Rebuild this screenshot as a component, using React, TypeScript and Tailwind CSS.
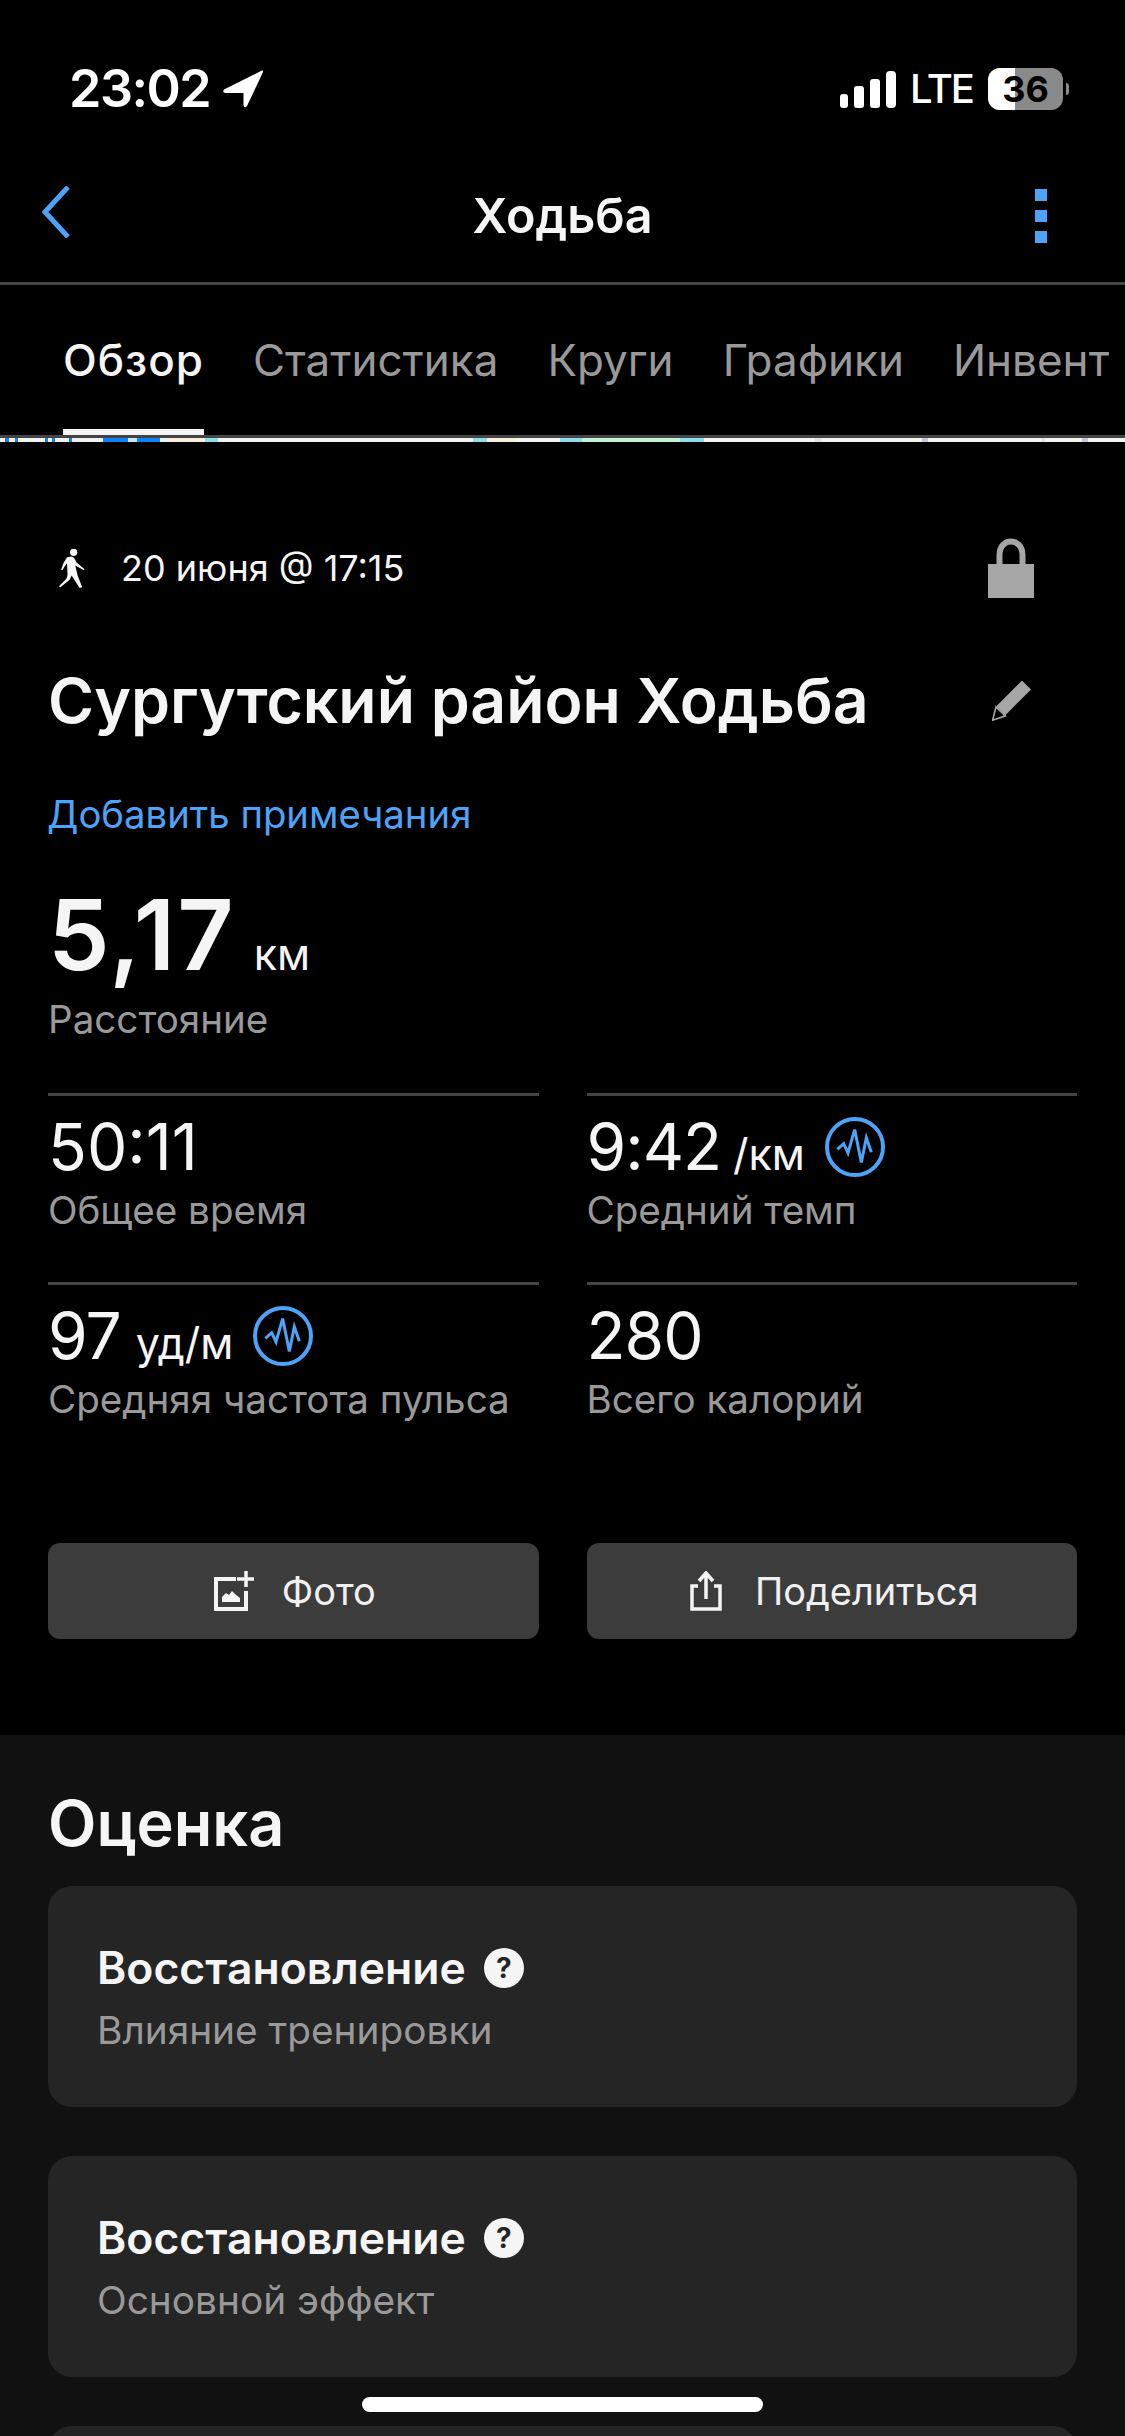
const font = { fontFamily: 'Inter, "Noto Sans", sans-serif' }

function PulseIcon() {
  return (
    <svg className="ml-[20px] size-[60px] shrink-0 self-center" viewBox="66 52 180 180" fill="none" stroke="#4da3f7">
      <circle cx="156" cy="142" r="84" strokeWidth="12" />
      <path d="M103 149 L122 132 L135 160 L155 90 L175 188 L190 114 L205 158" strokeWidth="9" />
    </svg>
  )
}

function Stat({
  value,
  unit,
  label,
  pulse,
  valueClass = 'tracking-[-1px]',
  unitClass = '',
}: {
  value: string
  unit?: string
  label: string
  pulse?: boolean
  valueClass?: string
  unitClass?: string
}) {
  return (
    <div className="h-[189px] border-t-[3px] border-[#444444] pt-[19px]">
      <div className="flex h-[64px] items-start">
        <div className="flex items-baseline gap-[15px]">
          <span className={`text-[64px] leading-[64px] text-[#f5f5f5] ${valueClass}`}>{value}</span>
          {unit && <span className={`text-[43px] leading-[64px] text-[#f5f5f5] ${unitClass}`}>{unit}</span>}
        </div>
        {pulse && <PulseIcon />}
      </div>
      <div className="mt-[6px] text-[38.6px] leading-[50px] text-[#999999]">{label}</div>
    </div>
  )
}

function ScoreCard({ label }: { label?: string }) {
  return (
    <div className="h-[221px] shrink-0 rounded-[24px] bg-[#252525] px-[49px] pt-[57px]">
      {label && (
        <>
          <div className="flex h-[50px] items-center gap-[18px]">
            <span className="text-[44.5px] leading-[50px] font-semibold text-[#f5f5f5]">Восстановление</span>
            <span className="flex size-[40px] items-center justify-center rounded-full bg-[#f5f5f5] text-[28px] leading-none font-bold text-[#252525]">?</span>
          </div>
          <div className="mt-[12px] text-[38.8px] leading-[50px] text-[#999999]">{label}</div>
        </>
      )}
    </div>
  )
}

const tabs = ['Обзор', 'Статистика', 'Круги', 'Графики', 'Инвент']

// the sliver of map that shows under the tabs
const mapStrip = [
  { x: 5, w: 4, fill: '#1a7fe8' },
  { x: 15, w: 3, fill: '#1a7fe8' },
  { x: 45, w: 3, fill: '#1a7fe8' },
  { x: 52, w: 3, fill: '#1a7fe8' },
  { x: 69, w: 3, fill: '#1a7fe8' },
  { x: 103, w: 25, fill: '#0a84ff' },
  { x: 128, w: 9, fill: '#cfe6fb' },
  { x: 137, w: 23, fill: '#0a84ff' },
  { x: 167, w: 38, fill: '#f5efdc' },
  { x: 205, w: 13, fill: '#8fdcea' },
  { x: 473, w: 14, fill: '#8fdcea' },
  { x: 487, w: 28, fill: '#f5efdc' },
  { x: 560, w: 22, fill: '#8fdcea' },
  { x: 582, w: 98, fill: '#c5f0d8' },
  { x: 680, w: 24, fill: '#8fdcea' },
  { x: 815, w: 6, fill: '#dfe3e8' },
  { x: 922, w: 6, fill: '#c4c9d0' },
  { x: 1042, w: 3, fill: '#dfe3e8' },
  { x: 1082, w: 6, fill: '#c4c9d0' },
]

export default function App() {
  return (
    <div className="relative h-[2436px] w-[1125px] overflow-hidden bg-black" style={font}>
      {/* Status bar */}
      <div className="flex h-[150px] items-start justify-between pt-[64px] pr-[56px] pl-[69px]">
        <div className="flex h-[50px] items-center gap-[13px]">
          <span className="text-[52px] leading-[50px] font-semibold tracking-[-1.5px] text-white">23:02</span>
          <svg className="h-[38px] w-[40px]" viewBox="0 0 40 38" fill="#ffffff">
            <path d="M39 0.5 Q40.5 0 40 2 L24 36 Q21.5 39 20.5 35 L20.5 23 L2 23 Q-1 22 1 19.5 Z" />
          </svg>
        </div>
        <div className="flex h-[50px] items-center">
          <div className="flex items-end gap-[6px]">
            <div className="h-[14px] w-[8px] rounded-[3px] bg-white" />
            <div className="h-[22px] w-[10px] rounded-[3px] bg-white" />
            <div className="h-[29px] w-[10px] rounded-[3px] bg-white" />
            <div className="h-[37px] w-[10px] rounded-[4px] bg-white" />
          </div>
          <span className="ml-[14px] text-[40px] leading-[50px] font-medium tracking-[-2px] text-white">LTE</span>
          <div className="relative ml-[15px] h-[42px] w-[75px] overflow-hidden rounded-[12px] bg-[#8a8a8a]">
            <div className="h-full w-[27px] bg-white" />
            <span className="absolute inset-0 flex items-center justify-center text-[36px] leading-none font-bold text-black">36</span>
          </div>
          <div className="ml-[3px] h-[12px] w-[3px] rounded-r-full bg-[#8a8a8a]" />
        </div>
      </div>

      {/* Nav */}
      <div className="relative flex h-[135px] items-start justify-center border-b-[3px] border-[#444444]">
        <svg className="absolute top-[36px] left-[42px] h-[52px] w-[28px]" viewBox="0 0 28 52" fill="none" stroke="#4da3f7" strokeWidth="5">
          <path d="M26 1 L3 26 L26 51" />
        </svg>
        <span className="mt-[36px] text-[48.5px] leading-[60px] font-semibold text-[#f5f5f5]">Ходьба</span>
        <div className="absolute top-[39px] right-[78px] flex flex-col gap-[9px]">
          <div className="size-[12px] bg-[#4da3f7]" />
          <div className="size-[12px] bg-[#4da3f7]" />
          <div className="size-[12px] bg-[#4da3f7]" />
        </div>
      </div>

      {/* Tabs */}
      <div className="flex h-[150px] gap-[49px] overflow-hidden pl-[63px]">
        {tabs.map((t, i) => (
          <div
            key={t}
            className={`flex h-[150px] shrink-0 items-center border-b-[6px] pt-[6px] text-[44px] ${
              i === 0 ? 'border-[#f5f5f5] font-medium tracking-[1px] text-[#f5f5f5]' : 'border-transparent text-[#999999]'
            }`}
          >
            {t}
          </div>
        ))}
      </div>
      <div className="h-[3px] bg-[#444444]" />
      <svg className="block h-[4px] w-[1125px]" viewBox="0 0 1125 4">
        <rect width="1125" height="4" fill="#f2f2f0" />
        {mapStrip.map((s) => (
          <rect key={s.x} x={s.x} width={s.w} height="4" fill={s.fill} />
        ))}
      </svg>

      {/* Activity summary */}
      <div className="px-[48px] pb-[96px]">
        <div className="mt-[96px] flex h-[60px] items-center justify-between pr-[43px]">
          <div className="flex items-center">
            <svg className="ml-[11px] h-[39px] w-[26px]" viewBox="88 85 78 118" fill="#f5f5f5">
              <circle cx="132" cy="95" r="11" />
              <path d="M112 110 Q100 125 94 148 L98 149 Q105 135 112 128 L113 155 Q115 165 110 175 L87 198 L92 201 L120 178 L126 165 L150 203 L158 201 L144 165 L137 135 L163 149 L165 146 L140 125 Q135 110 125 108 Z" />
            </svg>
            <span className="ml-[36px] text-[36px] leading-[50px] text-[#f5f5f5]">20 июня @ 17:15</span>
          </div>
          <svg className="h-[60px] w-[46px]" viewBox="0 0 46 60" fill="none">
            <path d="M11.5 26 V17 C11.5 -1 34.5 -1 34.5 17 V26" stroke="#a6a6a6" strokeWidth="6" />
            <rect y="26" width="46" height="34" fill="#a6a6a6" />
          </svg>
        </div>
        <div className="mt-[62px] flex h-[80px] items-center justify-between pr-[46px]">
          <h1 className="text-[62.5px] leading-[80px] font-semibold text-[#f5f5f5]">Сургутский район Ходьба</h1>
          <svg className="h-[41px] w-[39px]" viewBox="95 480 117 122" fill="none">
            <path d="M185 481 L212 508 L135 585 L108 558 Z" fill="#a6a6a6" />
            <path d="M107 560 L97 600 L135 587 Z" stroke="#a6a6a6" strokeWidth="5" />
          </svg>
        </div>
        <div className="mt-[49px] -ml-[1px] text-[38.3px] leading-[50px] text-[#4da3f7]">Добавить примечания</div>
        <div className="mt-[46px] flex h-[100px] items-baseline gap-[18px]">
          <span className="text-[98px] leading-[100px] font-semibold tracking-[2px] text-[#f5f5f5]">5,17</span>
          <span className="text-[43px] leading-[100px] text-[#f5f5f5]">км</span>
        </div>
        <div className="mt-[9px] text-[38.6px] leading-[50px] text-[#999999]">Расстояние</div>

        <div className="mt-[49px] grid grid-cols-2 gap-x-[48px]">
          <Stat value="50:11" label="Общее время" valueClass="tracking-normal" />
          <Stat value="9:42" unit="/км" unitClass="-ml-[3px]" label="Средний темп" pulse />
          <Stat value="97" unit="уд/м" label="Средняя частота пульса" pulse />
          <Stat value="280" label="Всего калорий" />
        </div>

        <div className="mt-[72px] grid grid-cols-2 gap-x-[48px]">
          <div className="flex h-[96px] items-center justify-center gap-[28px] rounded-[12px] bg-[#3c3c3c] pl-[3px]">
            <svg className="size-[40px]" viewBox="0 0 40 40" fill="none" stroke="#f5f5f5">
              <path d="M22 8 H2 V38 H32 V20" strokeWidth="4" />
              <path d="M32 0 V16 M23 8 H40" strokeWidth="3.5" />
              <path d="M8 31 V26 L12 22 L15 24 L18 20 L22 24 L26 27 V31 Z" fill="#f5f5f5" stroke="none" />
            </svg>
            <span className="text-[38px] leading-[50px] text-[#f0f0f0]">Фото</span>
          </div>
          <div className="flex h-[96px] items-center justify-center gap-[33px] rounded-[12px] bg-[#3c3c3c] pl-[5px]">
            <svg className="h-[40px] w-[32px]" viewBox="0 0 32 40" fill="none" stroke="#f5f5f5" strokeWidth="3.5">
              <path d="M8 15 H2 V38 H30 V15 H24" />
              <path d="M16 28 V3 M9 10 L16 2 L23 10" />
            </svg>
            <span className="text-[38px] leading-[50px] text-[#f0f0f0]">Поделиться</span>
          </div>
        </div>
      </div>

      {/* Evaluation */}
      <div className="h-[701px] bg-[#111111] px-[48px] pt-[53px]">
        <h2 className="text-[63px] leading-[70px] font-semibold text-[#f5f5f5]">Оценка</h2>
        <div className="mt-[28px] flex flex-col gap-[49px]">
          <ScoreCard label="Влияние тренировки" />
          <ScoreCard label="Основной эффект" />
          <ScoreCard />
        </div>
      </div>

      {/* Home indicator */}
      <div className="absolute top-[2397px] left-[362px] h-[15px] w-[401px] rounded-full bg-white" />
    </div>
  )
}
